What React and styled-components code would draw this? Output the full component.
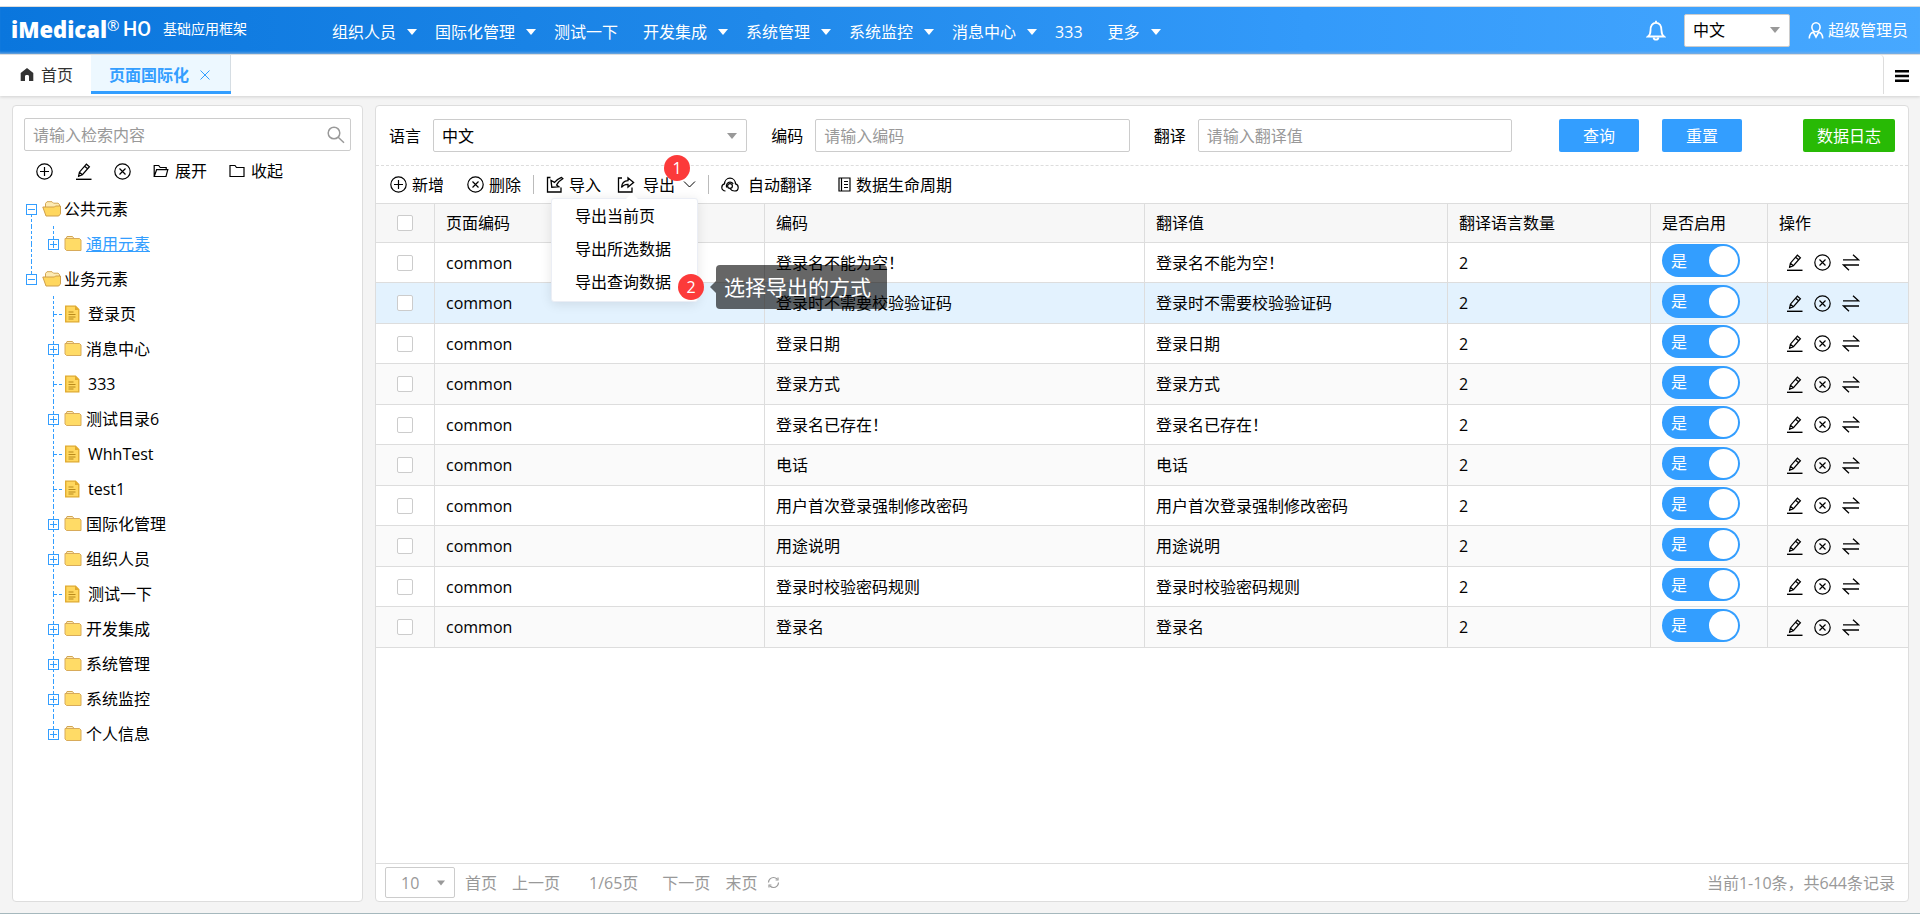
import React, { useState } from "react";
import styled, { createGlobalStyle, css } from "styled-components";

const GlobalStyle = createGlobalStyle`
  * {
    box-sizing: border-box;
  }

  body {
    margin: 0;
    background: #f4f4f4;
    color: #000;
    font-family: "Open Sans", "Noto Sans CJK SC", sans-serif;
    font-size: 16px;
    line-height: 24px;
  }

  button, input, select {
    font: inherit;
    color: inherit;
  }

  button {
    padding: 0;
    border: 0;
    background: none;
    cursor: pointer;
    white-space: nowrap;
  }
`;

/* ---------- data ---------- */

const menus = [
  { name: "组织人员", sub: true },
  { name: "国际化管理", sub: true },
  { name: "测试一下" },
  { name: "开发集成", sub: true },
  { name: "系统管理", sub: true },
  { name: "系统监控", sub: true },
  { name: "消息中心", sub: true },
  { name: "333" },
  { name: "更多", sub: true },
];

const tree = [
  {
    name: "公共元素",
    children: [{ name: "通用元素", folder: true, active: true }],
  },
  {
    name: "业务元素",
    children: [
      { name: "登录页" },
      { name: "消息中心", folder: true },
      { name: "333" },
      { name: "测试目录6", folder: true },
      { name: "WhhTest" },
      { name: "test1" },
      { name: "国际化管理", folder: true },
      { name: "组织人员", folder: true },
      { name: "测试一下" },
      { name: "开发集成", folder: true },
      { name: "系统管理", folder: true },
      { name: "系统监控", folder: true },
      { name: "个人信息", folder: true },
    ],
  },
];

const rows = [
  "登录名不能为空！",
  "登录时不需要校验验证码",
  "登录日期",
  "登录方式",
  "登录名已存在！",
  "电话",
  "用户首次登录强制修改密码",
  "用途说明",
  "登录时校验密码规则",
  "登录名",
];

/* ---------- icons ---------- */

const Stroke = styled.svg.attrs({
  fill: "none",
  stroke: "currentColor",
  "aria-hidden": true,
})`
  display: block;
  flex: none;
`;

const CirclePlusIcon = () => (
  <Stroke width="17" height="17" viewBox="0 0 17 17" strokeWidth="1.2">
    <circle cx="8.5" cy="8.5" r="7.7" />
    <path d="M8.5 4v9M4 8.5h9" />
  </Stroke>
);

const CircleXIcon = () => (
  <Stroke width="17" height="17" viewBox="0 0 17 17" strokeWidth="1.2">
    <circle cx="8.5" cy="8.5" r="7.7" />
    <path d="M5.5 5.5l6 6M11.5 5.5l-6 6" />
  </Stroke>
);

const PencilIcon = () => (
  <Stroke width="17" height="17" viewBox="0 0 17 17" strokeWidth="1.2">
    <path d="M3.6 13.2l.8-4L11.4 1.2l3 2.5-7 8zM4.4 9.2l3 2.5M9.6 3.3l3 2.5" />
    <path d="M1 16.3h15.5" strokeWidth="1.4" />
  </Stroke>
);

const SwapIcon = () => (
  <Stroke width="18" height="17" viewBox="0 0 18 17" strokeWidth="1.3">
    <path d="M1 5.8h15.5L11 .8M17 11H1.5L7 16.2" />
  </Stroke>
);

const FolderOpenIcon = () => (
  <Stroke width="16" height="14" viewBox="0 0 16 14" strokeWidth="1.2">
    <path d="M1.2 12.5V1.5h4.5l1.5 2h6v2.2M1.2 12.5L3.6 5.7h11.2l-1.8 6.8z" />
  </Stroke>
);

const FolderIcon = () => (
  <Stroke width="16" height="14" viewBox="0 0 16 14" strokeWidth="1.2">
    <path d="M1 12.5v-11h5l1.5 2H15v9z" />
  </Stroke>
);

const SearchIcon = () => (
  <Stroke width="18" height="18" viewBox="0 0 18 18" strokeWidth="1.5">
    <circle cx="7" cy="7" r="5.8" />
    <path d="M11.2 11.2L17 16.8" />
  </Stroke>
);

const ImportIcon = () => (
  <Stroke width="18" height="17" viewBox="0 0 18 17" strokeWidth="1.3">
    <path d="M4.5 1.5h-3V16H15v-4.5" />
    <path d="M5 4.5l.8 6.7 7-.4-2.2-1.7c1-2.4 3-4.6 6.200-6.400l-1.300-1.300c-2.900 1.200-5.400 2.900-7 5z" />
  </Stroke>
);

const ExportIcon = () => (
  <Stroke width="18" height="17" viewBox="0 0 18 17" strokeWidth="1.3">
    <path d="M5 2H1.5v14H15v-4.5" />
    <path d="M4.5 11.5c.3-4.5 3-6.6 6.500-6.800V1.800l5.600 4.700-5.600 4.600V8.300c-3-.1-5 .8-6.500 3.200z" />
  </Stroke>
);

const ChevronIcon = () => (
  <Stroke width="13" height="9" viewBox="0 0 13 9" strokeWidth="1">
    <path d="M1 1.5L6.5 7 12 1.5" />
  </Stroke>
);

const CloudIcon = () => (
  <Stroke width="18" height="16" viewBox="0 0 18 16" strokeWidth="1.2">
    <path d="M4.5 14C2.300 14 .8 12.400.8 10.400c0-1.800 1.100-3.100 2.700-3.500C3.600 3.600 6 1.200 9 1.200s5.400 2.400 5.500 5.700c1.600.4 2.700 1.700 2.700 3.500 0 2-1.500 3.600-3.700 3.600-2.200 0-3.400-1-4.500-2.400" />
    <circle cx="9" cy="9" r="2.4" />
    <path d="M5.6 10.500c-.9-3 .8-5.300 3.400-5.300 1.500 0 2.500.6 3.200 1.600" />
  </Stroke>
);

const NotebookIcon = () => (
  <Stroke width="13" height="16" viewBox="0 0 13 16" strokeWidth="1.2">
    <path d="M1 1h11v13H1zM3.5 1v13M6 4.5h4M6 7.5h4M6 10.5h4" />
  </Stroke>
);

const RefreshIcon = () => (
  <Stroke width="13" height="13" viewBox="0 0 13 13" strokeWidth="1.2">
    <path d="M1.5 6.5c0-3 2.500-5 5-5 1.500 0 2.500.5 3.500 1.500M11.500 6.500c0 3-2.500 5-5 5-1.500 0-2.500-.5-3.500-1.500" />
    <path d="M8.6 4H11V1.500M4.400 9H2v2.500" />
  </Stroke>
);

const BellIcon = () => (
  <Stroke width="20" height="21" viewBox="0 0 20 21" strokeWidth="1.8">
    <path d="M2 16.500h16c-1.700-1.300-2.500-3-2.500-6C15.500 5.500 13.500 2.800 10 2.800S4.500 5.500 4.500 10.500c0 3-.8 4.700-2.500 6z" />
    <path d="M10 .8v2M7.500 17.500c.3 1.500 1.200 2.200 2.500 2.200s2.200-.7 2.500-2.200" />
  </Stroke>
);

const UserIcon = () => (
  <Stroke width="16" height="17" viewBox="0 0 16 17" strokeWidth="1.6">
    <ellipse cx="8" cy="5.3" rx="4.1" ry="4.5" />
    <path d="M1.3 16.5c0-3.500 1.500-5.600 4-6.500L8 15l2.700-5c2.500.9 4 3 4 6.500" />
  </Stroke>
);

const Solid = styled.svg.attrs({ fill: "currentColor", "aria-hidden": true })`
  display: block;
  flex: none;
`;

const HomeIcon = () => (
  <Solid width="14" height="13" viewBox="0 0 14 13">
    <path d="M7 0l6.300 5v8H9V8.500C9 7.400 8.200 7 7 7s-2 .4-2 1.500V13H.7V5z" />
  </Solid>
);

const BarsIcon = () => (
  <Solid width="14" height="12" viewBox="0 0 14 12">
    <path d="M0 0h14v2.500H0zM0 4.700h14v2.500H0zM0 9.500h14V12H0z" />
  </Solid>
);

const Triangle = ({ size = 10 }) => (
  <Solid width={size} height="6" viewBox="0 0 10 6">
    <path d="M0 0h10L5 6z" />
  </Solid>
);

const CloseIcon = () => (
  <Stroke width="10" height="10" viewBox="0 0 10 10" strokeWidth="1">
    <path d="M.5.5l9 9M9.500.5l-9 9" />
  </Stroke>
);

const YellowFolder = ({ open }) => (
  <svg width="20" height="18" viewBox="0 0 20 18" aria-hidden="true">
    {open ? (
      <>
        <path d="M3.500 8V3.500l1.500-1.800h5l1.500 1.500H16l1.500 1.300V10z" fill="#fdebb3" stroke="#d3a550" />
        <path d="M.8 7h11.700l1-1h5v7.800L16.700 16H4z" fill="#ffd75e" stroke="#cf9f4a" />
      </>
    ) : (
      <>
        <path d="M2 4l1-2.500h5.500L10 3.500z" fill="#fdebb3" stroke="#d3a550" />
        <path d="M1 3.500h14.500L17 5v10.500H2.500L1 14z" fill="#ffdb66" stroke="#d8ab5a" />
      </>
    )}
  </svg>
);

const YellowFile = () => (
  <svg width="18" height="18" viewBox="0 0 18 18" aria-hidden="true">
    <path d="M1.700 1.200h9.800l3.300 3.300v12.300H1.700z" fill="#ffd75e" stroke="#e0a92c" strokeWidth="1.3" />
    <path d="M11 1.500V5h3.500z" fill="#e0a92c" />
    <path d="M4.500 7h5M4.500 9.500h7M4.500 12h7M4.500 14h5" stroke="#b98a1c" />
  </svg>
);

/* One cell of the tree gutter: dashed guide lines with an optional expander */
const Branch = ({ up, down, leaf, box }) => (
  <svg width="22" height="35" viewBox="0 0 22 35" aria-hidden="true">
    <g stroke="#339eff" strokeDasharray="3 2" shapeRendering="crispEdges">
      {up && <path d="M11.500 0v18" />}
      {down && <path d="M11.500 18v17" />}
      {leaf && <path d="M12 18.500h10" />}
    </g>
    {box && (
      <g fill="#fff" stroke="#339eff" shapeRendering="crispEdges">
        <path d="M6.500 13.500h10v10h-10zM8 18.500h7" />
        {box === "plus" && <path d="M11.500 15v7" />}
      </g>
    )}
  </svg>
);

/* ---------- header ---------- */

const Page = styled.div`
  display: flex;
  flex-direction: column;
  min-height: 100vh;
  border-bottom: 1px solid #a5b8bd;
`;

const Header = styled.header`
  display: flex;
  align-items: center;
  height: 54px;
  border-top: 6px solid #fff;
  padding: 0 12px 0 11px;
  color: #fff;
  background: linear-gradient(90deg, #0a76dd 0%, #2089ea 40%, #339afa 68%, #47a8ff 100%);
  box-shadow: inset 0 1px 0 #dcdcdc, inset 0 -3px 3px -2px #8db9e4;
`;

const Brand = styled.div`
  display: flex;
  align-items: center;
  width: 321px;
  padding-bottom: 3px;
  white-space: nowrap;
`;

const BrandName = styled.span`
  width: 96px;
  font-size: 22px;
  font-weight: 800;
`;

const BrandMark = styled.sup`
  width: 16px;
  font-size: 15px;
  line-height: 16px;
  align-self: flex-start;
`;

const BrandSuffix = styled.span`
  font-family: Roboto, sans-serif;
  font-size: 20px;
  font-weight: 500;
`;

const BrandTitle = styled.span`
  margin-left: 12px;
  font-size: 14px;
`;

const Nav = styled.nav`
  display: flex;
  flex: 1;
  padding-top: 4px;
`;

const NavItem = styled.a`
  display: flex;
  align-items: center;
  gap: 11px;
  padding-right: ${({ $sub }) => ($sub ? 18 : 25)}px;
  color: inherit;
  text-decoration: none;
  white-space: nowrap;
`;

const HeaderTools = styled.div`
  display: flex;
  align-items: center;
`;

const SelectBox = styled.span`
  display: grid;
  align-items: center;
  justify-items: end;
  width: ${({ $width }) => $width || "100%"};
  height: ${({ $height }) => $height || 33}px;
  border: 1px solid #ccc;
  border-radius: 2px;
  background: #fff;
  color: #999;

  > * {
    grid-area: 1 / 1;
  }

  > svg {
    margin-right: 9px;
    pointer-events: none;
  }
`;

const SelectInput = styled.select`
  appearance: none;
  width: 100%;
  height: 100%;
  padding: 0 8px;
  border: 0;
  background: none;
  color: #000;
`;

const PageSizeSelect = styled(SelectInput)`
  padding-left: 15px;
  color: #999;
`;

const UserButton = styled.button`
  display: flex;
  align-items: center;
  gap: 4px;
  margin-left: 18px;
`;

const BellButton = styled.button`
  margin-right: 18px;
`;

/* ---------- tab bar ---------- */

const TabBar = styled.div`
  display: flex;
  height: 42px;
  border-top: 1px solid #ddd;
  background: #fff;
  box-shadow: 0 1px 3px rgba(0, 0, 0, 0.15);
`;

const Tabs = styled.div`
  display: flex;
  flex: 1;
  align-items: flex-start;
  margin-bottom: 2px;
  border-right: 1px solid #ddd;
  border-top-right-radius: 4px;
`;

const Tab = styled.button`
  display: flex;
  align-items: center;
  gap: 7px;
  height: 39px;
  padding: 0 18px 0 20px;
  color: #333;

  ${({ $active }) =>
    $active &&
    css`
      gap: 11px;
      padding: 3px 21px 0 18px;
      border-bottom: 3px solid #339eff;
      background: #edf8ff;
      box-shadow: inset -1px 0 0 #d5dde3;
      color: #339eff;
      font-weight: bold;
    `}
`;

const TabMenuButton = styled.button`
  display: flex;
  align-items: center;
  padding: 0 11px;
`;

/* ---------- layout ---------- */

const Main = styled.main`
  display: flex;
  flex: 1;
  gap: 12px;
  padding: 9px 11px 11px 12px;
`;

const Panel = styled.section`
  display: flex;
  flex-direction: column;
  border: 1px solid #ddd;
  border-radius: 4px;
  background: #fff;
`;

const SidePanel = styled(Panel)`
  flex: 0 0 351px;
`;

const ContentPanel = styled(Panel)`
  flex: 1;
  min-width: 0;
`;

/* ---------- side panel ---------- */

const SearchBox = styled.div`
  display: flex;
  align-items: center;
  height: 33px;
  margin: 12px 11px 0;
  padding: 0 5px 0 8px;
  border: 1px solid #ccc;
  border-radius: 2px;
  color: #999;
`;

const SearchInput = styled.input`
  flex: 1;
  min-width: 0;
  padding: 0;
  border: 0;
  background: none;

  &::placeholder {
    color: #999;
  }
`;

const SideActions = styled.div`
  display: flex;
  align-items: center;
  gap: 22px;
  height: 36px;
  margin: 2px 0;
  padding-left: 23px;
`;

const IconButton = styled.button`
  display: flex;
  align-items: center;
  gap: 6px;
`;

const TreeList = styled.ul`
  margin: 0;
  padding: 0 0 0 7px;
  list-style: none;
`;

const SubList = styled(TreeList)`
  padding: 0;
`;

const TreeRow = styled.div`
  display: flex;
  align-items: center;
  height: 35px;
`;

const TreeLabel = styled.a`
  margin-left: ${({ $file }) => ($file ? 6 : 2)}px;
  color: ${({ $active }) => ($active ? "#339eff" : "#000")};
  text-decoration: ${({ $active }) => ($active ? "underline" : "none")};
  white-space: nowrap;
`;

/* ---------- filters ---------- */

const FilterForm = styled.form`
  display: flex;
  align-items: center;
  gap: 24px;
  padding: 13px;
  border-bottom: 1px dashed #ddd;
`;

const Field = styled.div`
  display: flex;
  flex: 1;
  align-items: center;
  gap: 12px;
  min-width: 0;

  > label {
    flex: none;
  }
`;

const TextInput = styled.input`
  flex: 1;
  min-width: 0;
  height: 33px;
  padding: 0 8px;
  border: 1px solid #ccc;
  border-radius: 2px;

  &::placeholder {
    color: #999;
  }
`;

const FilterButtons = styled.div`
  display: flex;
  gap: 23px;
  margin: 0 37px 0 23px;
`;

const Button = styled.button`
  height: 33px;
  padding: 0 ${({ $green }) => ($green ? 14 : 24)}px;
  border-radius: 2px;
  background: ${({ $green }) => ($green ? "#28ba05" : "#339eff")};
  color: #fff;
`;

/* ---------- toolbar ---------- */

const Toolbar = styled.div`
  display: flex;
  align-items: center;
  gap: 12px;
  height: 38px;
  padding-left: 14px;
  border-bottom: 1px solid #ddd;
`;

const ToolGroup = styled.div`
  display: flex;
  gap: ${({ $gap }) => $gap}px;
`;

const ToolButton = styled.button`
  display: flex;
  align-items: center;
  gap: ${({ $gap }) => $gap || 5}px;
`;

const Divider = styled.span`
  width: 1px;
  height: 19px;
  background: #bbb;
`;

const ExportWrap = styled.div`
  position: relative;
  z-index: 2;
`;

const ExportMenu = styled.ul`
  position: absolute;
  top: 25px;
  left: -66px;
  width: 147px;
  margin: 0;
  padding: 1px 0 2px;
  border: 1px solid #ebeef5;
  border-radius: 3px;
  background: #fff;
  box-shadow: 0 2px 12px rgba(0, 0, 0, 0.1);
  list-style: none;

  &::before {
    content: "";
    position: absolute;
    top: -6px;
    left: 74px;
    border: solid transparent;
    border-width: 0 6px 6px;
    border-bottom-color: #fff;
  }
`;

const ExportOption = styled.button`
  display: block;
  width: 100%;
  height: 33px;
  padding-left: 23px;
  text-align: left;
`;

const Badge = styled.span`
  position: absolute;
  top: ${({ $top }) => $top}px;
  left: ${({ $left }) => $left}px;
  width: 26px;
  height: 26px;
  border-radius: 50%;
  background: #fc3a3a;
  color: #fff;
  line-height: 26px;
  text-align: center;
`;

const Tooltip = styled.div`
  position: absolute;
  top: 66px;
  left: 164px;
  padding: 0 16px 0 8px;
  border-radius: 4px;
  background: rgba(0, 0, 0, 0.6);
  color: #fff;
  font-size: 21px;
  line-height: 44px;
  white-space: nowrap;

  &::before {
    content: "";
    position: absolute;
    top: 16px;
    left: -6px;
    border: solid transparent;
    border-width: 6px 6px 6px 0;
    border-right-color: rgba(0, 0, 0, 0.6);
  }
`;

/* ---------- table ---------- */

const TableWrap = styled.div`
  flex: 1;
`;

const Table = styled.table`
  width: 100%;
  table-layout: fixed;
  border-spacing: 0;

  th,
  td {
    height: 40px;
    padding: 0 11px;
    border-right: 1px solid #ddd;
    border-bottom: 1px solid #ddd;
    font-weight: normal;
    text-align: left;
    white-space: nowrap;
  }

  th {
    height: 39px;
    background: #f7f7f7;
  }

  th:last-child,
  td:last-child {
    border-right: 0;
  }
`;

const Row = styled.tr`
  background: ${({ $active }) => ($active ? "#e3f2fe" : "#fff")};

  &:nth-child(even) {
    background: ${({ $active }) => ($active ? "#e3f2fe" : "#fafafa")};
  }

  &:nth-child(even) td {
    height: 41px;
  }
`;

const Check = styled.input.attrs({ type: "checkbox" })`
  appearance: none;
  display: block;
  width: 16px;
  height: 16px;
  margin: 0 0 0 10px;
  border: 1px solid #ccc;
  border-radius: 2px;
  background: #fff;

  &:checked {
    background: #339eff;
  }
`;

const Toggle = styled.label`
  display: flex;
  align-items: center;
  justify-content: space-between;
  width: 78px;
  height: 33px;
  margin-bottom: 4px;
  padding: 0 2px 0 9px;
  border-radius: 17px;
  background: #339eff;
  color: #fff;
`;

const ToggleKnob = styled.input.attrs({ type: "checkbox" })`
  appearance: none;
  width: 29px;
  height: 29px;
  margin: 0;
  border-radius: 50%;
  background: #fff;
`;

const RowActions = styled.div`
  display: flex;
  gap: 11px;
  padding-left: 7px;
`;

/* ---------- pager ---------- */

const Pager = styled.footer`
  display: flex;
  align-items: center;
  justify-content: space-between;
  height: 38px;
  padding: 0 13px 0 9px;
  border-top: 1px solid #ddd;
  color: #999;
`;

const PagerLinks = styled.div`
  display: flex;
  align-items: center;
`;

const PagerButton = styled.button`
  margin-left: ${({ $gap }) => $gap || 15}px;
  color: #999;
`;

const PagerText = styled.span`
  margin-left: 29px;
`;

const TopBar = () => (
  <Header>
    <Brand>
      <BrandName>iMedical</BrandName>
      <BrandMark>®</BrandMark>
      <BrandSuffix>HO</BrandSuffix>
      <BrandTitle>基础应用框架</BrandTitle>
    </Brand>
    <Nav>
      {menus.map((m) => (
        <NavItem key={m.name} href="#" $sub={m.sub}>
          {m.name}
          {m.sub && <Triangle />}
        </NavItem>
      ))}
    </Nav>
    <HeaderTools>
      <BellButton aria-label="消息">
        <BellIcon />
      </BellButton>
      <SelectBox $width="106px">
        <SelectInput aria-label="界面语言">
          <option>中文</option>
        </SelectInput>
        <Triangle />
      </SelectBox>
      <UserButton>
        <UserIcon />
        超级管理员
      </UserButton>
    </HeaderTools>
  </Header>
);

const TabStrip = () => (
  <TabBar>
    <Tabs>
      <Tab>
        <HomeIcon />
        首页
      </Tab>
      <Tab $active>
        页面国际化
        <CloseIcon />
      </Tab>
    </Tabs>
    <TabMenuButton aria-label="菜单">
      <BarsIcon />
    </TabMenuButton>
  </TabBar>
);

/* hasNext carries the parent guide line down to the next root */
const TreeNode = ({ node, isLast, hasNext }) => (
  <li>
    <TreeRow>
      <Branch up={hasNext} down={hasNext} />
      <Branch up down={!isLast} leaf={!node.folder} box={node.folder && "plus"} />
      {node.folder ? <YellowFolder /> : <YellowFile />}
      <TreeLabel href="#" $file={!node.folder} $active={node.active}>
        {node.name}
      </TreeLabel>
    </TreeRow>
  </li>
);

const ElementTree = () => (
  <TreeList>
    {tree.map((root, i) => {
      const hasNext = i < tree.length - 1;
      return (
        <li key={root.name}>
          <TreeRow>
            <Branch up={i > 0} down={hasNext} box="minus" />
            <YellowFolder open />
            <TreeLabel href="#">{root.name}</TreeLabel>
          </TreeRow>
          <SubList>
            {root.children.map((node, j) => (
              <TreeNode
                key={node.name}
                node={node}
                isLast={j === root.children.length - 1}
                hasNext={hasNext}
              />
            ))}
          </SubList>
        </li>
      );
    })}
  </TreeList>
);

const Sidebar = () => (
  <SidePanel>
    <SearchBox>
      <SearchInput aria-label="检索内容" placeholder="请输入检索内容" />
      <SearchIcon />
    </SearchBox>
    <SideActions>
      <IconButton aria-label="新增">
        <CirclePlusIcon />
      </IconButton>
      <IconButton aria-label="修改">
        <PencilIcon />
      </IconButton>
      <IconButton aria-label="删除">
        <CircleXIcon />
      </IconButton>
      <IconButton>
        <FolderOpenIcon />
        展开
      </IconButton>
      <IconButton>
        <FolderIcon />
        收起
      </IconButton>
    </SideActions>
    <ElementTree />
  </SidePanel>
);

const Filters = () => (
  <FilterForm onSubmit={(e) => e.preventDefault()}>
    <Field>
      <label htmlFor="lang">语言</label>
      <SelectBox>
        <SelectInput id="lang">
          <option>中文</option>
        </SelectInput>
        <Triangle />
      </SelectBox>
    </Field>
    <Field>
      <label htmlFor="code">编码</label>
      <TextInput id="code" placeholder="请输入编码" />
    </Field>
    <Field>
      <label htmlFor="value">翻译</label>
      <TextInput id="value" placeholder="请输入翻译值" />
    </Field>
    <FilterButtons>
      <Button type="submit">查询</Button>
      <Button type="reset">重置</Button>
    </FilterButtons>
    <Button type="button" $green>
      数据日志
    </Button>
  </FilterForm>
);

const Actions = () => (
  <Toolbar>
    <ToolGroup $gap={23}>
      <ToolButton>
        <CirclePlusIcon />
        新增
      </ToolButton>
      <ToolButton>
        <CircleXIcon />
        删除
      </ToolButton>
    </ToolGroup>
    <Divider />
    <ToolGroup $gap={16}>
      <ToolButton>
        <ImportIcon />
        导入
      </ToolButton>
      <ExportWrap>
        <ToolButton $gap={8}>
          <ExportIcon />
          导出
          <ChevronIcon />
        </ToolButton>
        <Badge $top={-18} $left={47}>
          1
        </Badge>
        <ExportMenu>
          <li>
            <ExportOption>导出当前页</ExportOption>
          </li>
          <li>
            <ExportOption>导出所选数据</ExportOption>
          </li>
          <li>
            <ExportOption>导出查询数据</ExportOption>
          </li>
          <Badge as="li" $top={75} $left={126}>
            2
          </Badge>
          <Tooltip as="li">选择导出的方式</Tooltip>
        </ExportMenu>
      </ExportWrap>
    </ToolGroup>
    <Divider />
    <ToolGroup $gap={26}>
      <ToolButton $gap={9}>
        <CloudIcon />
        自动翻译
      </ToolButton>
      <ToolButton>
        <NotebookIcon />
        数据生命周期
      </ToolButton>
    </ToolGroup>
  </Toolbar>
);

const DataTable = () => {
  const [enabled, setEnabled] = useState(rows.map(() => true));

  const flip = (i) => setEnabled(enabled.map((v, k) => (k === i ? !v : v)));

  return (
    <TableWrap>
      <Table>
        <colgroup>
          <col width="59" />
          <col width="330" />
          <col width="380" />
          <col width="303" />
          <col width="203" />
          <col width="117" />
          <col width="140" />
        </colgroup>
        <thead>
          <tr>
            <th>
              <Check aria-label="全选" />
            </th>
            <th>页面编码</th>
            <th>编码</th>
            <th>翻译值</th>
            <th>翻译语言数量</th>
            <th>是否启用</th>
            <th>操作</th>
          </tr>
        </thead>
        <tbody>
          {rows.map((text, i) => (
            <Row key={text} $active={i === 1}>
              <td>
                <Check aria-label={text} />
              </td>
              <td>common</td>
              <td>{text}</td>
              <td>{text}</td>
              <td>2</td>
              <td>
                <Toggle>
                  {enabled[i] ? "是" : "否"}
                  <ToggleKnob checked={enabled[i]} onChange={() => flip(i)} />
                </Toggle>
              </td>
              <td>
                <RowActions>
                  <IconButton aria-label="修改">
                    <PencilIcon />
                  </IconButton>
                  <IconButton aria-label="删除">
                    <CircleXIcon />
                  </IconButton>
                  <IconButton aria-label="翻译">
                    <SwapIcon />
                  </IconButton>
                </RowActions>
              </td>
            </Row>
          ))}
        </tbody>
      </Table>
    </TableWrap>
  );
};

const Pagination = () => (
  <Pager>
    <PagerLinks>
      <SelectBox $width="70px" $height={31}>
        <PageSizeSelect aria-label="每页条数">
          <option>10</option>
        </PageSizeSelect>
        <Triangle size={8} />
      </SelectBox>
      <PagerButton $gap={10}>首页</PagerButton>
      <PagerButton>上一页</PagerButton>
      <PagerText>1/65页</PagerText>
      <PagerButton $gap={24}>下一页</PagerButton>
      <PagerButton>末页</PagerButton>
      <PagerButton $gap={10} aria-label="刷新">
        <RefreshIcon />
      </PagerButton>
    </PagerLinks>
    <span>当前1-10条，共644条记录</span>
  </Pager>
);

const App = () => {
  return (
    <Page>
      <GlobalStyle />
      <TopBar />
      <TabStrip />
      <Main>
        <Sidebar />
        <ContentPanel>
          <Filters />
          <Actions />
          <DataTable />
          <Pagination />
        </ContentPanel>
      </Main>
    </Page>
  );
};

export default App;
